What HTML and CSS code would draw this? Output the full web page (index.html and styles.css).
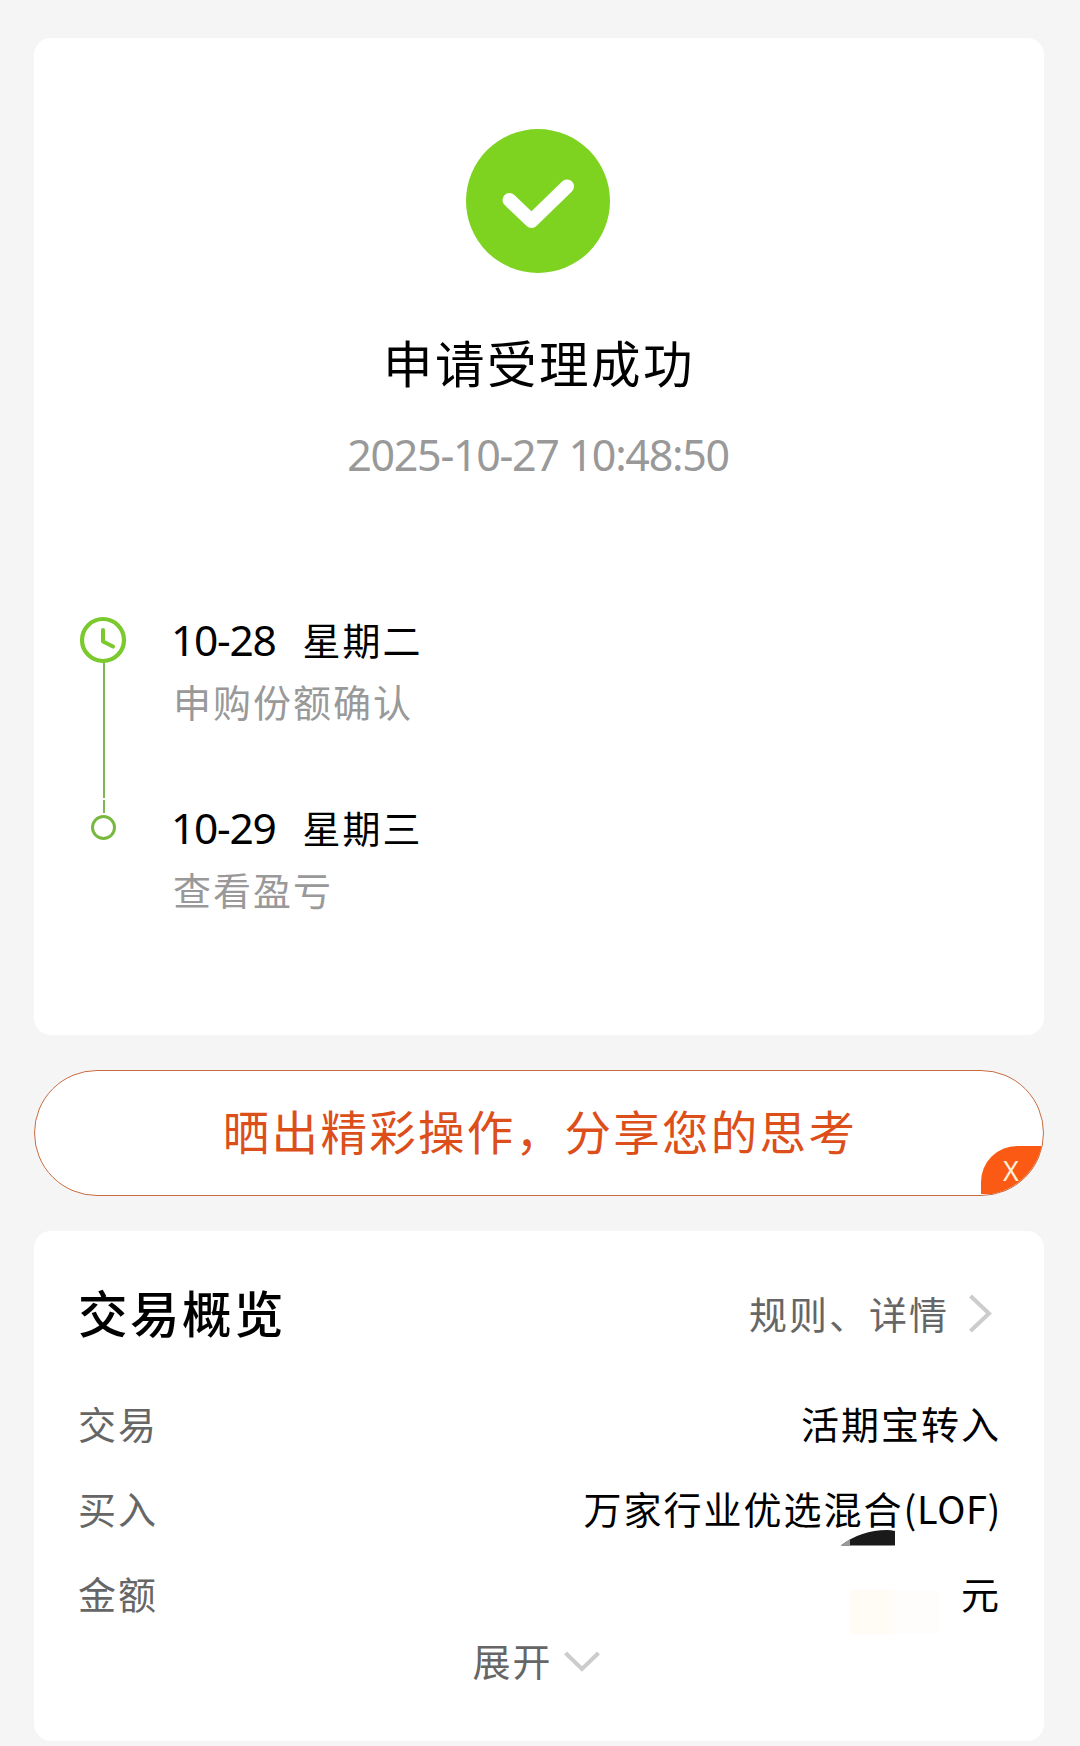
FILE: index.html
```html
<!DOCTYPE html>
<html lang="zh-CN">
<head>
<meta charset="utf-8">
<title>申请受理成功</title>
<link rel="stylesheet" href="styles.css">
</head>
<body>
<main class="page">
  <section class="card result">
    <svg class="success-icon" viewBox="0 0 144 144"><circle cx="72" cy="72" r="72" fill="#7ed321"/><path d="M43.500 71 L65.500 92 L101 57.500" fill="none" stroke="#fff" stroke-width="14" stroke-linecap="round" stroke-linejoin="round"/></svg>
    <h1 class="result-title">申请受理成功</h1>
    <p class="result-time">2025-10-27 10:48:50</p>
    <div class="timeline">
      <svg class="track" viewBox="0 0 48 216">
        <path d="M25 46V182M25 184V197" stroke="#7fb850" stroke-width="2"/>
        <circle cx="24" cy="24" r="21" fill="#fff" stroke="#7ac92d" stroke-width="4.200"/>
        <path d="M24 14V25.500L34 30.500" fill="none" stroke="#7ac92d" stroke-width="4" stroke-linecap="round" stroke-linejoin="round"/>
        <circle cx="24.500" cy="211.500" r="11" fill="#fff" stroke="#79b83f" stroke-width="3"/>
      </svg>
      <ol class="steps">
        <li class="step">
          <p class="step-date"><span class="num">10-28</span><span class="weekday">星期二</span></p>
          <p class="step-text">申购份额确认</p>
        </li>
        <li class="step">
          <p class="step-date"><span class="num">10-29</span><span class="weekday">星期三</span></p>
          <p class="step-text">查看盈亏</p>
        </li>
      </ol>
    </div>
  </section>

  <div class="share"><span class="share-text">晒出精彩操作，分享您的思考</span><span class="share-close"><span class="close-x">X</span></span></div>

  <section class="card overview">
    <header class="overview-head">
      <h2 class="overview-title">交易概览</h2>
      <a class="rules">规则、详情<svg class="chevron-right" viewBox="0 0 24 42"><path d="M2.500 3L21 20.500L2.500 38" fill="none" stroke="#ccc" stroke-width="4"/></svg></a>
    </header>
    <dl class="rows">
      <div class="row"><dt>交易</dt><dd>活期宝转入</dd></div>
      <div class="row"><dt>买入</dt><dd>万家行业优选混合<span class="latin">(LOF)</span></dd></div>
      <div class="row amount"><dt>金额</dt><dd>元</dd>
        <svg class="mask" viewBox="0 0 100 106"><path d="M0 15.500Q20 0 46 0Q50 0 54 1V15.500Z" fill="#1a1a1a"/><path d="M0 15.500L9 9V15.500Z" fill="#999"/><path d="M9 60H53V104H9Z" fill="#fffbf5"/><path d="M53 60H98V104H53Z" fill="#fffdfb"/></svg>
      </div>
    </dl>
    <div class="expand">展开<svg class="chevron-down" viewBox="0 0 38 24"><path d="M2.500 3L19 19L35.500 3" fill="none" stroke="#ccc" stroke-width="4"/></svg></div>
  </section>
</main>
</body>
</html>
```

FILE: styles.css
```css
* { box-sizing: border-box; }
body, h1, h2, p, ol, dl, dd { margin: 0; padding: 0; }
body {
  background: #f5f5f5;
  color: #000;
  font-family: "Noto Sans CJK SC", sans-serif;
  font-size: 38px;
}
.page {
  height: 1746px;
  padding: 38px 36px 0 34px;
  display: flex;
  flex-direction: column;
  gap: 35px;
  overflow: hidden;
}
.card { background: #fff; border-radius: 17px; }

.result {
  height: 997px;
  display: flex;
  flex-direction: column;
  align-items: center;
  padding-top: 91px;
}
.success-icon { width: 144px; height: 144px; flex: none; margin-right: 2px; }
.result-title {
  margin-top: 54px;
  font-size: 49.5px;
  line-height: 70px;
  font-weight: 400;
  letter-spacing: 2.5px;
}
.result-time {
  margin-top: 28px;
  padding-right: 2px;
  font-family: "Noto Sans", sans-serif;
  font-size: 43px;
  line-height: 60px;
  letter-spacing: -1.3px;
  color: #999;
}
.timeline {
  align-self: stretch;
  margin-top: 131px;
  padding-left: 45px;
  display: flex;
  gap: 44px;
}
.track { width: 48px; height: 216px; flex: none; overflow: visible; }
.steps { list-style: none; display: flex; flex-direction: column; gap: 68px; }
.step-date {
  display: flex;
  gap: 27px;
  line-height: 48px;
}
.num { font-family: "Noto Sans", sans-serif; font-size: 42.5px; letter-spacing: -1.3px; }
.weekday, .step-text { letter-spacing: 2px; }
.weekday { line-height: 46px; }
.step-text { margin-top: 7px; padding-left: 2px; line-height: 60px; color: #999; }
.step { height: 120px; }

.share {
  position: relative;
  height: 126px;
  border: 1.5px solid #c86c40;
  border-radius: 63px;
  background: #fff;
  overflow: hidden;
  display: flex;
  align-items: center;
  justify-content: center;
  color: #dc4f1a;
  font-size: 46.5px;
  letter-spacing: 2.3px;
}
.share-text { padding: 0 0 8px 2px; }
.share-close {
  position: absolute;
  right: 0;
  bottom: 1px;
  width: 62px;
  height: 48px;
  border-top-left-radius: 36px;
  background: #fb5a14;
}
.close-x {
  display: block;
  padding-left: 22px;
  font-size: 27px;
  line-height: 50px;
  letter-spacing: 0;
  color: #fff0dc;
  font-family: "Noto Sans", sans-serif;
}

.overview { height: 510px; padding: 46px 43px 0 44px; }
.overview-head {
  height: 70px;
  display: flex;
  align-items: center;
  justify-content: space-between;
}
.overview-title { font-size: 49.5px; line-height: 70px; font-weight: 500; letter-spacing: 2.5px; }
.rules {
  display: flex;
  align-items: center;
  gap: 19px;
  padding-right: 9px;
  color: #666;
  letter-spacing: 2px;
}
.chevron-right { width: 24px; height: 42px; margin-top: 4px; }
.rows { margin-top: 33px; }
.row {
  position: relative;
  height: 85px;
  display: flex;
  align-items: center;
  justify-content: space-between;
  letter-spacing: 2px;
}
.row dt { color: #666; }
.latin { letter-spacing: 0.6px; }
.mask {
  position: absolute;
  left: 763px;
  top: -20px;
  width: 100px;
  height: 106px;
}
.expand {
  display: flex;
  align-items: center;
  justify-content: center;
  gap: 10px;
  height: 56px;
  margin-top: -4px;
  padding-right: 6px;
  color: #666;
  letter-spacing: 2px;
}
.chevron-down { width: 38px; height: 24px; margin-top: 6px; }
```
